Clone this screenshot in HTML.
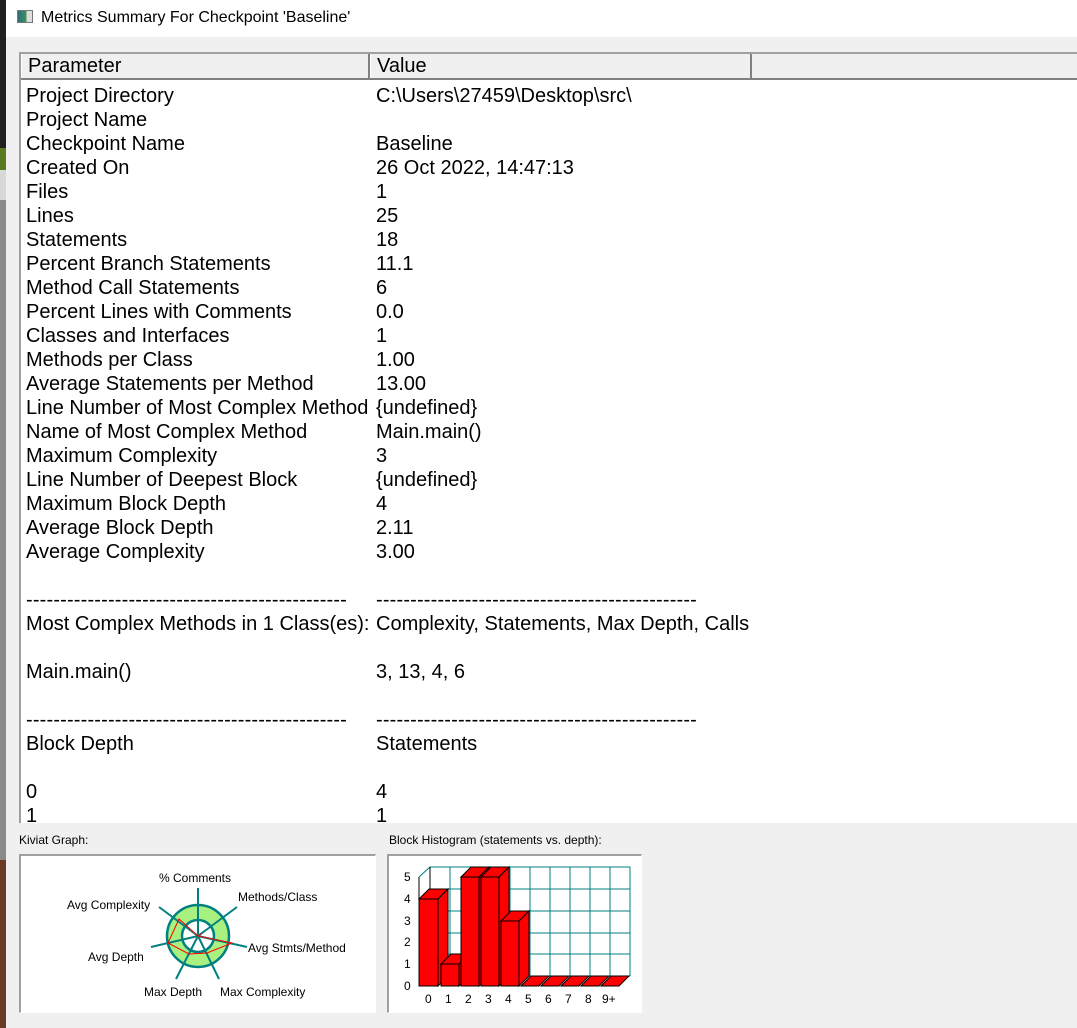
<!DOCTYPE html>
<html><head><meta charset="utf-8"><style>
*{margin:0;padding:0;box-sizing:border-box}
body{width:1077px;height:1028px;overflow:hidden;background:#f0f0f0;font-family:"Liberation Sans",Arial,sans-serif;position:relative}
#strip{position:absolute;left:0;top:0;width:6px;height:1028px;background:#202020}
#strip .a{position:absolute;left:0;top:148px;width:6px;height:22px;background:#5a7a20}
#strip .b{position:absolute;left:0;top:170px;width:6px;height:30px;background:#d8d8d8}
#strip .c{position:absolute;left:0;top:200px;width:6px;height:660px;background:#8a8a8a}
#strip .d{position:absolute;left:0;top:860px;width:6px;height:168px;background:#6a3a25}
#title{position:absolute;left:6px;top:0;width:1071px;height:37px;background:#fff}
#title .ic{position:absolute;left:11px;top:10px;width:16px;height:13px;border:1px solid #777;background:linear-gradient(90deg,#2f6f7a 0,#3e8f5c 60%,#ddd 60%)}
#title .t{position:absolute;left:35px;top:9px;font-size:16px;color:#000}
#table{position:absolute;left:19px;top:52px;width:1058px;height:771px;background:#fff;border-left:2px solid #a0a0a0;border-top:2px solid #a0a0a0;overflow:hidden}
#hdr{position:absolute;left:0;top:0;width:1060px;height:26px;background:#f0f0f0;border-bottom:2px solid #808080}
.hc{position:absolute;top:0;height:24px;font-size:20px;line-height:24px;padding-left:6px;border-right:2px solid #808080;border-left:1px solid #fff}
.row{position:absolute;left:0;font-size:20px;line-height:24px;white-space:nowrap;color:#000}
.row span{position:absolute;left:350px}
.dash{letter-spacing:0.17px}
.lbl{position:absolute;font-size:12px;color:#000}
.panel{position:absolute;background:#fff;border-left:2px solid #a0a0a0;border-top:2px solid #a0a0a0;border-right:1px solid #fff;border-bottom:1px solid #fff}
</style></head><body>
<div id="strip"><div class="a"></div><div class="b"></div><div class="c"></div><div class="d"></div></div>
<div id="title"><div class="ic"></div><div class="t">Metrics Summary For Checkpoint 'Baseline'</div></div>
<div id="table">
<div id="hdr">
<div class="hc" style="left:0;width:349px">Parameter</div>
<div class="hc" style="left:349px;width:382px">Value</div>
</div>
<div class="row" style="left:5px;top:30px">Project Directory<span>C:\Users\27459\Desktop\src\</span></div>
<div class="row" style="left:5px;top:54px">Project Name</div>
<div class="row" style="left:5px;top:78px">Checkpoint Name<span>Baseline</span></div>
<div class="row" style="left:5px;top:102px">Created On<span>26 Oct 2022, 14:47:13</span></div>
<div class="row" style="left:5px;top:126px">Files<span>1</span></div>
<div class="row" style="left:5px;top:150px">Lines<span>25</span></div>
<div class="row" style="left:5px;top:174px">Statements<span>18</span></div>
<div class="row" style="left:5px;top:198px">Percent Branch Statements<span>11.1</span></div>
<div class="row" style="left:5px;top:222px">Method Call Statements<span>6</span></div>
<div class="row" style="left:5px;top:246px">Percent Lines with Comments<span>0.0</span></div>
<div class="row" style="left:5px;top:270px">Classes and Interfaces<span>1</span></div>
<div class="row" style="left:5px;top:294px">Methods per Class<span>1.00</span></div>
<div class="row" style="left:5px;top:318px">Average Statements per Method<span>13.00</span></div>
<div class="row" style="left:5px;top:342px">Line Number of Most Complex Method<span>{undefined}</span></div>
<div class="row" style="left:5px;top:366px">Name of Most Complex Method<span>Main.main()</span></div>
<div class="row" style="left:5px;top:390px">Maximum Complexity<span>3</span></div>
<div class="row" style="left:5px;top:414px">Line Number of Deepest Block<span>{undefined}</span></div>
<div class="row" style="left:5px;top:438px">Maximum Block Depth<span>4</span></div>
<div class="row" style="left:5px;top:462px">Average Block Depth<span>2.11</span></div>
<div class="row" style="left:5px;top:486px">Average Complexity<span>3.00</span></div>
<div class="row dash" style="left:5px;top:534px">-----------------------------------------------<span>-----------------------------------------------</span></div>
<div class="row" style="left:5px;top:558px">Most Complex Methods in 1 Class(es):<span>Complexity, Statements, Max Depth, Calls</span></div>
<div class="row" style="left:5px;top:606px">Main.main()<span>3, 13, 4, 6</span></div>
<div class="row dash" style="left:5px;top:654px">-----------------------------------------------<span>-----------------------------------------------</span></div>
<div class="row" style="left:5px;top:678px">Block Depth<span>Statements</span></div>
<div class="row" style="left:5px;top:726px">0<span>4</span></div>
<div class="row" style="left:5px;top:750px">1<span>1</span></div>
</div>
<div class="lbl" style="left:19px;top:833px">Kiviat Graph:</div>
<div class="lbl" style="left:389px;top:833px">Block Histogram (statements vs. depth):</div>
<div class="panel" style="left:19px;top:854px;width:357px;height:159px"></div>
<div class="panel" style="left:387px;top:854px;width:255px;height:159px"></div>
<svg style="position:absolute;left:0;top:0" width="1077" height="1028" font-family="Liberation Sans,Arial,sans-serif" font-size="12">
<circle cx="198" cy="936" r="31" fill="#a8f080" stroke="#008080" stroke-width="2.5"/>
<circle cx="198" cy="936" r="16" fill="#fff" stroke="#008080" stroke-width="2.5"/>
<g stroke="#008080" stroke-width="2">
<line x1="198" y1="936" x2="198" y2="888"/><line x1="198" y1="936" x2="237" y2="907"/>
<line x1="198" y1="936" x2="247" y2="947"/><line x1="198" y1="936" x2="219" y2="979"/>
<line x1="198" y1="936" x2="176" y2="979"/><line x1="198" y1="936" x2="151" y2="947"/>
<line x1="198" y1="936" x2="159" y2="907"/></g>
<polygon points="198,936 179,919 198,936 202,933 198,936 232,943 207,953 189,954 168,943 179,919" fill="none" stroke="#f00" stroke-width="1"/>
<g fill="#000"><text x="159" y="882">% Comments</text><text x="238" y="901">Methods/Class</text>
<text x="67" y="909">Avg Complexity</text><text x="248" y="952">Avg Stmts/Method</text>
<text x="88" y="961">Avg Depth</text><text x="144" y="996">Max Depth</text><text x="220" y="996">Max Complexity</text></g>
<g stroke="#008080" stroke-width="1" fill="none">
<rect x="430" y="867" width="200" height="109"/>
<line x1="430" y1="889" x2="630" y2="889"/><line x1="430" y1="911" x2="630" y2="911"/><line x1="430" y1="933" x2="630" y2="933"/><line x1="430" y1="954" x2="630" y2="954"/>
<line x1="450" y1="867" x2="450" y2="976"/><line x1="470" y1="867" x2="470" y2="976"/><line x1="490" y1="867" x2="490" y2="976"/><line x1="510" y1="867" x2="510" y2="976"/><line x1="530" y1="867" x2="530" y2="976"/><line x1="550" y1="867" x2="550" y2="976"/><line x1="570" y1="867" x2="570" y2="976"/><line x1="590" y1="867" x2="590" y2="976"/><line x1="610" y1="867" x2="610" y2="976"/>
<line x1="419" y1="877" x2="430" y2="867"/>
</g>
<line x1="419" y1="877" x2="419" y2="986" stroke="#000"/><line x1="430" y1="867" x2="430" y2="976" stroke="#000"/>
<g fill="#000" font-size="12"><text x="404" y="881">5</text><text x="404" y="903">4</text><text x="404" y="925">3</text><text x="404" y="946">2</text><text x="404" y="968">1</text><text x="404" y="990">0</text>
<text x="425" y="1003">0</text><text x="445" y="1003">1</text><text x="465" y="1003">2</text><text x="485" y="1003">3</text><text x="505" y="1003">4</text><text x="525" y="1003">5</text><text x="545" y="1003">6</text><text x="565" y="1003">7</text><text x="585" y="1003">8</text><text x="602" y="1003">9+</text></g>
<g fill="#f00" stroke="#000" stroke-width="1">
<polygon points="419,899 429,889 448,889 438,899"/><polygon points="438,899 448,889 448,976 438,986"/><rect x="419" y="899" width="19" height="87"/>
<polygon points="441,964 451,954 469,954 459,964"/><polygon points="459,964 469,954 469,976 459,986"/><rect x="441" y="964" width="18" height="22"/>
<polygon points="461,877 471,867 489,867 479,877"/><polygon points="479,877 489,867 489,976 479,986"/><rect x="461" y="877" width="18" height="109"/>
<polygon points="481,877 491,867 509,867 499,877"/><polygon points="499,877 509,867 509,976 499,986"/><rect x="481" y="877" width="18" height="109"/>
<polygon points="501,921 511,911 529,911 519,921"/><polygon points="519,921 529,911 529,976 519,986"/><rect x="501" y="921" width="18" height="65"/>
<polygon points="521,986 531,976 549,976 539,986"/><polygon points="541,986 551,976 569,976 559,986"/><polygon points="561,986 571,976 589,976 579,986"/><polygon points="581,986 591,976 609,976 599,986"/><polygon points="601,986 611,976 629,976 619,986"/>
</g>
</svg>
</body></html>
